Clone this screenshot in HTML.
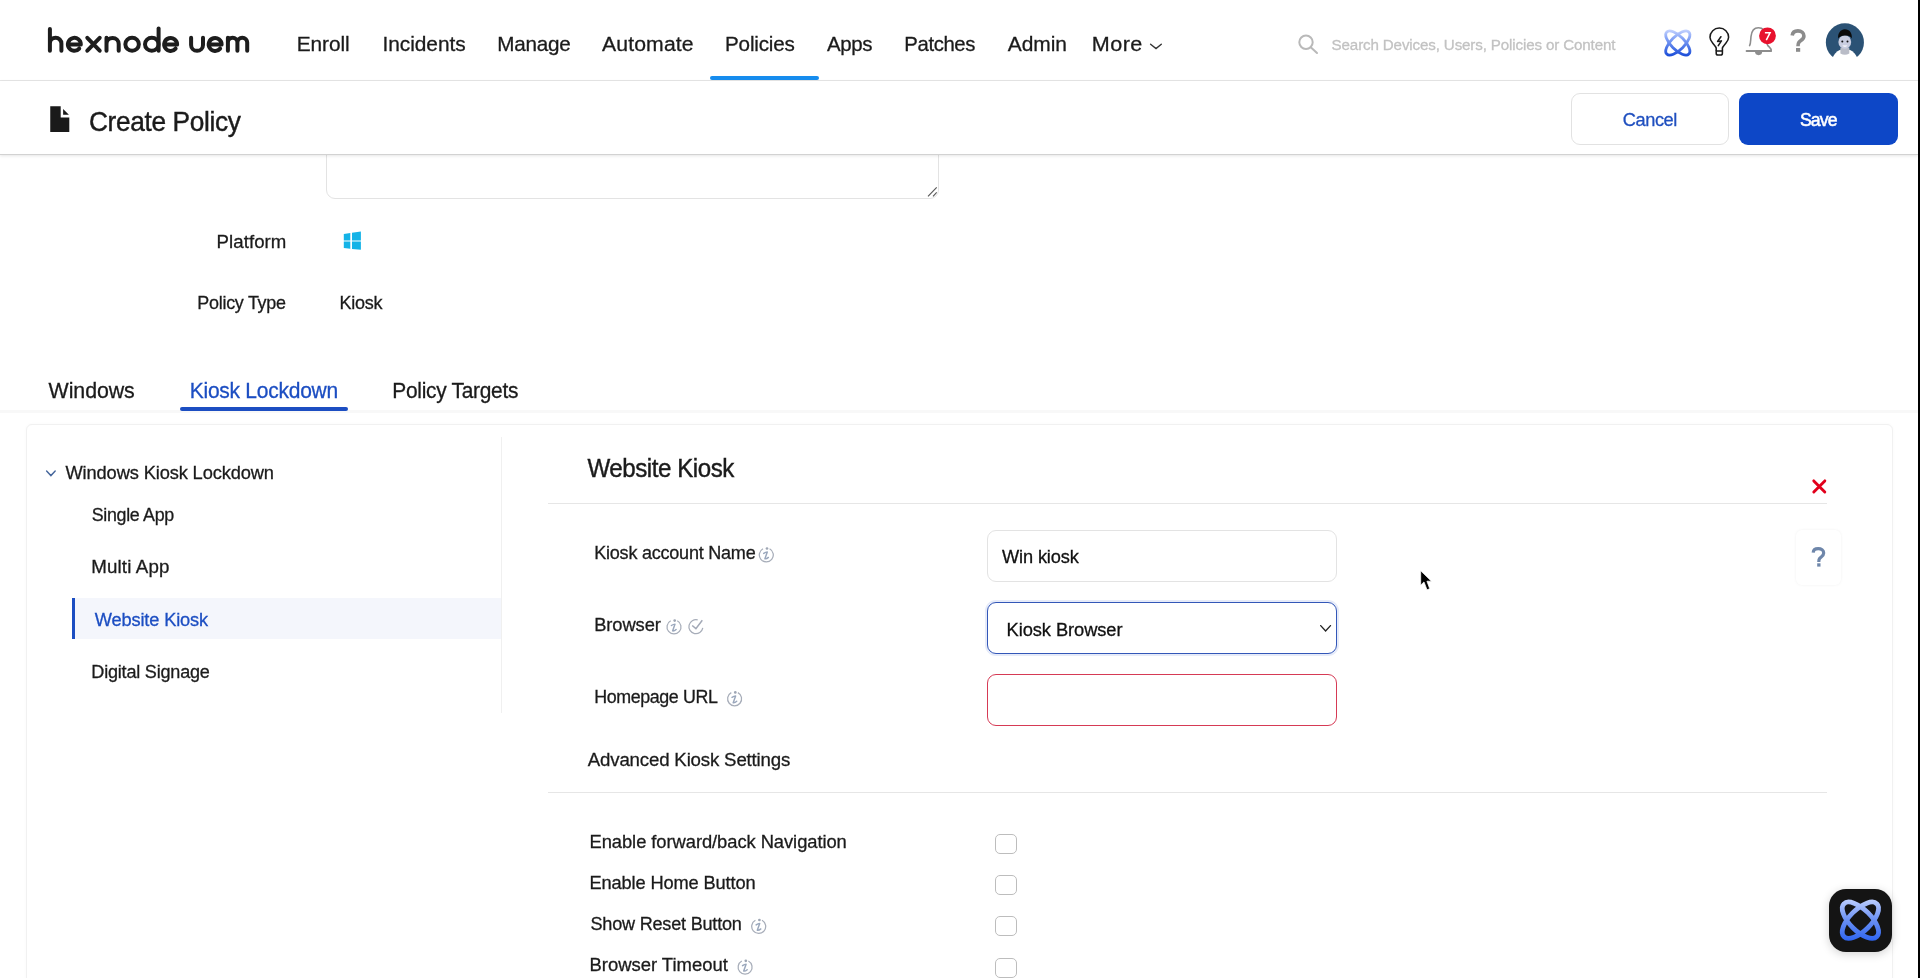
<!DOCTYPE html>
<html lang="en">
<head>
<meta charset="utf-8">
<title>Create Policy - hexnode uem</title>
<style>
  html, body { margin: 0; padding: 0; }
  body { width: 1920px; height: 978px; overflow: hidden; background: #ffffff; position: relative;
         font-family: "Liberation Sans", sans-serif; color: #1b1b1b; }
  .abs { position: absolute; box-sizing: border-box; }
  #header { left: 0; top: 0; width: 1918px; height: 81px; background: #fff; border-bottom: 1px solid #e6e6e6; }
  #nav-underline { left: 710px; top: 76px; width: 109px; height: 4px; background: #168cee; border-radius: 2px; }
  #subbar { left: 0; top: 81px; width: 1918px; height: 74px; background: #fff; border-bottom: 1px solid #d2d2d2;
            box-shadow: 0 1px 3px rgba(0,0,0,0.10); z-index: 3; }
  #btn-cancel { left: 1571px; top: 93px; width: 158px; height: 52px; border: 1px solid #e2e2e2; border-radius: 9px; background: #fff; z-index: 4; }
  #btn-save { left: 1739px; top: 93px; width: 159px; height: 52px; background: #0d47c7; border-radius: 9px; z-index: 4; }
  #textarea { left: 326px; top: 120px; width: 613px; height: 79px; border: 1px solid #e3e3e3; border-radius: 9px; background: #fff; z-index: 1; }
  #tabbar { left: 0; top: 410px; width: 1918px; height: 3px; background: #f8f8f8; }
  #tab-underline { left: 179.5px; top: 406.5px; width: 168px; height: 4px; background: #1c4ec2; border-radius: 2px; z-index: 2; }
  #card { left: 25.5px; top: 424px; width: 1867px; height: 600px; border: 1px solid #f1f1f1; border-radius: 6px; background: #fff;
          box-shadow: 0 0 3px rgba(0,0,0,0.03); }
  #sidebar-border { left: 501px; top: 437px; width: 1px; height: 276px; background: #f0f0f0; }
  #side-active { left: 72px; top: 597.5px; width: 429px; height: 41px; background: #f4f6fc; }
  #side-active-bar { left: 72px; top: 597.5px; width: 2.6px; height: 41px; background: #1c4ec2; }
  .sep { height: 1.6px; background: #e6e6e6; }
  #help-box { left: 1796px; top: 530px; width: 45px; height: 55px; border-radius: 6px; background: #fff;
              box-shadow: 0 0 3px rgba(0,0,0,0.06); }
  .input { border-radius: 9px; background: #fff; }
  #in-name { left: 987px; top: 530px; width: 350px; height: 52px; border: 1px solid #e3e3e3; }
  #in-browser { left: 987px; top: 602px; width: 350px; height: 52px; border: 1.6px solid #3357b8; box-shadow: 0 0 0 2px rgba(60,100,210,0.13); }
  #in-url { left: 987px; top: 674px; width: 350px; height: 52px; border: 1.6px solid #d63a55; }
  .cb { width: 21.5px; height: 20px; border: 1.1px solid #bdbdbd; border-radius: 5px; background: #fff; }
  #chat { left: 1829px; top: 889px; width: 63px; height: 63px; background: #141414; border-radius: 17px;
          box-shadow: 0 2px 10px rgba(0,0,0,0.18); z-index: 4; }
  #scrollstrip { left: 1918px; top: 0; width: 2px; height: 978px; background: #000; z-index: 10; }
  #overlay { position: absolute; left: 0; top: 0; z-index: 5; will-change: transform; }
  #overlay text { font-family: "Liberation Sans", sans-serif; }
</style>
</head>
<body>
  <div class="abs" id="textarea"></div>
  <div class="abs" id="header"></div>
  <div class="abs" id="nav-underline"></div>
  <div class="abs" id="subbar"></div>
  <div class="abs" id="btn-cancel"></div>
  <div class="abs" id="btn-save"></div>
  <div class="abs" id="tabbar"></div>
  <div class="abs" id="tab-underline"></div>
  <div class="abs" id="card"></div>
  <div class="abs" id="sidebar-border"></div>
  <div class="abs" id="side-active"></div>
  <div class="abs" id="side-active-bar"></div>
  <div class="abs sep" style="left:548px;top:502.5px;width:1279px;"></div>
  <div class="abs sep" style="left:548px;top:791.5px;width:1279px;"></div>
  <div class="abs" id="help-box"></div>
  <div class="abs input" id="in-name"></div>
  <div class="abs input" id="in-browser"></div>
  <div class="abs input" id="in-url"></div>
  <div class="abs cb" style="left:995px;top:834px;"></div>
  <div class="abs cb" style="left:995px;top:875px;"></div>
  <div class="abs cb" style="left:995px;top:916px;"></div>
  <div class="abs cb" style="left:995px;top:957.5px;"></div>
  <div class="abs" id="chat"></div>
  <div class="abs" id="scrollstrip"></div>

  <svg id="overlay" width="1920" height="978" viewBox="0 0 1920 978">
    <defs>
      <linearGradient id="atomg" gradientUnits="userSpaceOnUse" x1="0" y1="29" x2="0" y2="57">
        <stop offset="0" stop-color="#c9d6ff"/>
        <stop offset="0.42" stop-color="#7597f3"/>
        <stop offset="1" stop-color="#1548d6"/>
      </linearGradient>
      <linearGradient id="atomg2" gradientUnits="userSpaceOnUse" x1="0" y1="898" x2="0" y2="942">
        <stop offset="0" stop-color="#c2d2ff"/>
        <stop offset="0.5" stop-color="#6a90f4"/>
        <stop offset="1" stop-color="#2b62f0"/>
      </linearGradient>
    </defs>

    <!-- logo: hexnode uem -->
    <g fill="none" stroke="#1d1d1d" stroke-width="4" stroke-linecap="round" stroke-linejoin="round">
      <!-- h -->
      <path d="M49.9 28.9 V50.7 M49.9 43.6 A5.75 5.75 0 0 1 61.4 43.6 V50.7"/>
      <!-- e -->
      <path d="M68.1 44.6 H80.8 A6.45 6.45 0 1 0 79.2 48.6"/>
      <!-- x -->
      <path d="M87.3 37.8 L99.7 50.7 M99.7 37.8 L87.3 50.7"/>
      <!-- n -->
      <path d="M106.5 37.8 V50.7 M106.5 44 A6.1 6.1 0 0 1 118.7 44 V50.7"/>
      <!-- o -->
      <ellipse cx="132.1" cy="44.25" rx="6.75" ry="6.5"/>
      <!-- d -->
      <path d="M158.6 28.4 V50.7"/>
      <ellipse cx="151.8" cy="44.25" rx="6.8" ry="6.5"/>
      <!-- e -->
      <path d="M164.6 44.6 H177.1 A6.45 6.45 0 1 0 175.6 48.6"/>
      <!-- u -->
      <path d="M191.1 37.8 V44.9 A5.95 5.95 0 0 0 203 44.9 V37.8"/>
      <!-- e -->
      <path d="M209.1 44.6 H221.6 A6.45 6.45 0 1 0 220.1 48.6"/>
      <!-- m -->
      <path d="M227.9 37.8 V50.7 M227.9 42.6 A4.75 4.75 0 0 1 237.4 42.6 V50.7 M237.4 42.6 A4.9 4.9 0 0 1 247.2 42.6 V50.7"/>
    </g>

    <!-- More chevron -->
    <path d="M1150.6 44.3 L1156 48.6 L1161.3 44.3" fill="none" stroke="#333" stroke-width="1.4" stroke-linecap="round"/>

    <!-- search icon -->
    <g fill="none" stroke="#b9b9b9" stroke-width="2">
      <circle cx="1306" cy="42.3" r="6.7"/>
      <path d="M1311 47.4 L1317 53" stroke-linecap="round"/>
    </g>

    <!-- atom icon (header) -->
    <g fill="none" stroke="url(#atomg)" stroke-width="2.8">
      <path d="M1688.83 54.03 A15.6 6.7 45 1 1 1666.77 31.97 A15.6 6.7 45 1 1 1688.83 54.03 Z"/>
      <path d="M1688.83 31.97 A15.6 6.7 -45 1 1 1666.77 54.03 A15.6 6.7 -45 1 1 1688.83 31.97 Z"/>
    </g>

    <!-- bulb icon -->
    <g fill="none" stroke="#1a1a1a" stroke-width="1.55" stroke-linejoin="round">
      <path d="M1716.2 51 V48.2 C1716 46.4 1714.6 45.5 1712.8 43.3 C1711.2 41.4 1710 39.6 1710 37.3 A9.3 9.3 0 0 1 1728.6 37.3 C1728.6 39.6 1727.4 41.4 1725.8 43.3 C1724 45.5 1722.6 46.4 1722.4 48.2 V51"/>
      <path d="M1716.2 51 H1722.4 V53.2 Q1722.4 55 1720.6 55 H1718 Q1716.2 55 1716.2 53.2 Z"/>
      <path d="M1720.9 36.7 L1717.6 41.4 L1721.4 40.9 L1718.3 45.6" stroke-linecap="round"/>
    </g>

    <!-- bell icon -->
    <g fill="none" stroke="#8d8d8d" stroke-width="1.6" stroke-linecap="round">
      <path d="M1749.6 45.6 C1750.8 43.6 1750.6 40 1751 36.5 C1751.6 31 1754.5 27.8 1758.4 27.8 C1762.5 27.8 1765.5 31 1766 36.5 C1766.4 40.5 1766.3 43.5 1767.8 45.5 C1769.2 47.3 1771.6 48.4 1771.2 50.9"/>
      <path d="M1746.6 51 H1771" stroke-width="1.9"/>
    </g>
    <path d="M1755 51.6 A3.6 3.6 0 0 0 1762.2 51.6 Z" fill="#8d8d8d"/>
    <circle cx="1767.5" cy="35.8" r="8.4" fill="#e8112d"/>
    <path d="M1764.9 32.7 H1770.1 L1766.3 40.2" fill="none" stroke="#fff" stroke-width="1.5" stroke-linejoin="miter"/>

    <!-- question mark (header) -->
    <g fill="none" stroke="#8c8c8c" stroke-width="3.6">
      <path d="M1792.2 35.5 C1792.6 32.2 1795 30.9 1797.9 30.9 C1801.6 30.9 1803.9 32.9 1803.9 35.9 C1803.9 39.6 1800.5 40.2 1798.9 42.3 C1798.2 43.2 1798 44.3 1798 46.2"/>
    </g>
    <rect x="1796" y="48" width="4.2" height="3.8" fill="#8c8c8c"/>

    <!-- avatar -->
    <g>
      <circle cx="1844.9" cy="42.4" r="19.05" fill="#2b5275"/>
      <ellipse cx="1844.9" cy="63.2" rx="13.4" ry="14.2" fill="#ffffff"/>
      <rect x="1824" y="61.5" width="42" height="6" fill="#ffffff"/>
      <path d="M1840.4 47.5 H1849.3 V53.5 Q1844.9 56.2 1840.4 53.5 Z" fill="#b9bcc7"/>
      <ellipse cx="1844.8" cy="42" rx="6.4" ry="6.7" fill="#c9cde0"/>
      <path d="M1838.2 38.6 C1837.6 33.6 1840.2 29.6 1844.6 29.3 C1849.4 29.1 1852.4 32.8 1851.8 38.6 C1850.6 36.3 1848.4 35.4 1845.6 35.6 C1842.6 35.3 1839.8 36.2 1838.2 38.6 Z" fill="#0b0b0b"/>
      <circle cx="1842.3" cy="41.5" r="1" fill="#111"/>
      <circle cx="1847.5" cy="41.5" r="1" fill="#111"/>
      <path d="M1842.3 45.4 Q1844.9 48.2 1847.5 45.4 Z" fill="#fff"/>
    </g>

    <!-- document icon -->
    <path d="M50.25 106.2 H60.7 V117.5 H69.3 V132.1 H50.25 Z" fill="#1a1a1a"/>
    <path d="M63.1 109.1 V114.8 H68.9 Z" fill="#1a1a1a"/>

    <!-- textarea resize handle -->
    <path d="M928 196.3 L936.7 187.3 M933 196.3 L936.7 192.4" stroke="#5a5a5a" stroke-width="1.2"/>

    <!-- windows icon -->
    <g fill="#14b3e7">
      <path d="M343.8 234 L350.3 233.1 V240.5 H343.8 Z"/>
      <path d="M352 232.8 L360.9 231.6 V240.5 H352 Z"/>
      <path d="M343.8 241.6 H350.3 V248.8 L343.8 247.9 Z"/>
      <path d="M352 241.6 H360.9 V249.8 L352 248.9 Z"/>
    </g>

    <!-- sidebar chevron -->
    <path d="M46.6 471 L50.9 475.6 L55.2 471" fill="none" stroke="#46679c" stroke-width="1.4" stroke-linecap="round"/>

    <!-- red X -->
    <path d="M1813.8 480.9 L1824.8 492 M1824.8 480.9 L1813.8 492" stroke="#e2001c" stroke-width="2.9" stroke-linecap="round"/>

    <!-- help ? -->
    <g fill="none" stroke="#6e86aa" stroke-width="3.2">
      <path d="M1813.2 552.6 C1813.4 550 1815.3 548.7 1818.2 548.7 C1821.3 548.7 1823.7 550.3 1823.7 553 C1823.7 556.2 1820.9 556.7 1819.6 558.5 C1819 559.3 1818.8 560.3 1818.8 562"/>
    </g>
    <rect x="1817.2" y="563.3" width="3.3" height="3.3" fill="#6e86aa"/>

    <!-- info icons -->
    <path d="M769.59 548.72 A7.0 7.0 0 1 1 763.01 548.72" fill="none" stroke="#a7adb9" stroke-width="1.25"/><circle cx="767.00" cy="548.50" r="1.35" fill="#9ea6b4"/><path d="M763.70 553.40 Q765.70 552.00 767.30 552.00 L764.90 558.80 Q766.70 559.00 768.40 557.40" fill="none" stroke="#9aa7bc" stroke-width="1.45" stroke-linejoin="round" stroke-linecap="round"/>
<path d="M677.29 620.82 A7.0 7.0 0 1 1 670.71 620.82" fill="none" stroke="#a7adb9" stroke-width="1.25"/><circle cx="674.70" cy="620.60" r="1.35" fill="#9ea6b4"/><path d="M671.40 625.50 Q673.40 624.10 675.00 624.10 L672.60 630.90 Q674.40 631.10 676.10 629.50" fill="none" stroke="#9aa7bc" stroke-width="1.45" stroke-linejoin="round" stroke-linecap="round"/>
<path d="M737.89 692.62 A7.0 7.0 0 1 1 731.31 692.62" fill="none" stroke="#a7adb9" stroke-width="1.25"/><circle cx="735.30" cy="692.40" r="1.35" fill="#9ea6b4"/><path d="M732.00 697.30 Q734.00 695.90 735.60 695.90 L733.20 702.70 Q735.00 702.90 736.70 701.30" fill="none" stroke="#9aa7bc" stroke-width="1.45" stroke-linejoin="round" stroke-linecap="round"/>
<path d="M761.99 920.22 A7.0 7.0 0 1 1 755.41 920.22" fill="none" stroke="#a7adb9" stroke-width="1.25"/><circle cx="759.40" cy="920.00" r="1.35" fill="#9ea6b4"/><path d="M756.10 924.90 Q758.10 923.50 759.70 923.50 L757.30 930.30 Q759.10 930.50 760.80 928.90" fill="none" stroke="#9aa7bc" stroke-width="1.45" stroke-linejoin="round" stroke-linecap="round"/>
<path d="M748.39 961.02 A7.0 7.0 0 1 1 741.81 961.02" fill="none" stroke="#a7adb9" stroke-width="1.25"/><circle cx="745.80" cy="960.80" r="1.35" fill="#9ea6b4"/><path d="M742.50 965.70 Q744.50 964.30 746.10 964.30 L743.70 971.10 Q745.50 971.30 747.20 969.70" fill="none" stroke="#9aa7bc" stroke-width="1.45" stroke-linejoin="round" stroke-linecap="round"/>
<path d="M702.79 627.92 A7.0 7.0 0 1 1 697.71 619.94" fill="none" stroke="#a7adb9" stroke-width="1.25"/><path d="M692.20 625.50 L695.90 628.60 L702.30 620.30" fill="none" stroke="#a2a8b6" stroke-width="1.5"/>

    <!-- select chevron -->
    <path d="M1320.7 625.6 L1325.6 630.9 L1330.5 625.6" fill="none" stroke="#222" stroke-width="1.35" stroke-linecap="round"/>

    <!-- chat widget atom -->
    <g fill="none" stroke="url(#atomg2)" stroke-width="4.8">
      <path d="M1876.80 936.60 A23.2 10.4 45 1 1 1844.00 903.80 A23.2 10.4 45 1 1 1876.80 936.60 Z"/>
      <path d="M1876.80 903.80 A23.2 10.4 -45 1 1 1844.00 936.60 A23.2 10.4 -45 1 1 1876.80 903.80 Z"/>
    </g>

    <!-- cursor -->
    <defs><filter id="curblur" x="-50%" y="-50%" width="200%" height="200%"><feGaussianBlur stdDeviation="0.45"/></filter></defs>
    <path d="M1420.7 570.8 V585.2 L1424 581.9 L1427 589.8 L1429.7 588.7 L1426.9 581.2 H1431.4 Z" fill="#000" stroke="#fff" stroke-width="0.7" stroke-linejoin="round" filter="url(#curblur)"/>

    <text transform="translate(296.76 50.80) scale(0.9925 1)" font-size="21" fill="#1b1b1b" letter-spacing="-0.078" stroke="#1b1b1b" stroke-width="0.3">Enroll</text>
<text transform="translate(382.51 50.80) scale(0.9948 1)" font-size="21" fill="#1b1b1b" letter-spacing="-0.053" stroke="#1b1b1b" stroke-width="0.3">Incidents</text>
<text transform="translate(497.22 50.80) scale(0.9850 1)" font-size="21" fill="#1b1b1b" letter-spacing="-0.223" stroke="#1b1b1b" stroke-width="0.3">Manage</text>
<text transform="translate(602.00 50.80) scale(1.0100 1)" font-size="21" fill="#1b1b1b" letter-spacing="0.127" stroke="#1b1b1b" stroke-width="0.3">Automate</text>
<text transform="translate(725.02 50.80) scale(0.9825 1)" font-size="21" fill="#1b1b1b" letter-spacing="-0.177" stroke="#1b1b1b" stroke-width="0.3">Policies</text>
<text transform="translate(826.90 50.80) scale(0.9758 1)" font-size="21" fill="#1b1b1b" letter-spacing="-0.382" stroke="#1b1b1b" stroke-width="0.3">Apps</text>
<text transform="translate(904.33 50.80) scale(0.9680 1)" font-size="21" fill="#1b1b1b" letter-spacing="-0.396" stroke="#1b1b1b" stroke-width="0.3">Patches</text>
<text transform="translate(1007.70 50.80) scale(0.9988 1)" font-size="21" fill="#1b1b1b" letter-spacing="-0.018" stroke="#1b1b1b" stroke-width="0.3">Admin</text>
<text transform="translate(1091.87 50.80) scale(1.0281 1)" font-size="21" fill="#1b1b1b" letter-spacing="0.433" stroke="#1b1b1b" stroke-width="0.3">More</text>
<text transform="translate(1331.60 49.50) scale(0.9790 1)" font-size="15.5" fill="#c2c2c2" letter-spacing="-0.152" stroke="#c2c2c2" stroke-width="0.3">Search Devices, Users, Policies or Content</text>
<text transform="translate(88.93 131.10) scale(0.9729 1)" font-size="27" fill="#1b1b1b" letter-spacing="-0.362" stroke="#1b1b1b" stroke-width="0.42">Create Policy</text>
<text transform="translate(1622.80 125.90) scale(0.9606 1)" font-size="19" fill="#1f4fbf" letter-spacing="-0.456" stroke="#1f4fbf" stroke-width="0.3">Cancel</text>
<text transform="translate(1800.00 125.90) scale(0.9304 1)" font-size="19" fill="#ffffff" letter-spacing="-0.991" stroke="#ffffff" stroke-width="0.55">Save</text>
<text transform="translate(216.59 247.90) scale(1.0069 1)" font-size="18.5" fill="#1b1b1b" letter-spacing="0.066" stroke="#1b1b1b" stroke-width="0.3">Platform</text>
<text transform="translate(197.33 309.20) scale(0.9695 1)" font-size="18.5" fill="#1b1b1b" letter-spacing="-0.285" stroke="#1b1b1b" stroke-width="0.3">Policy Type</text>
<text transform="translate(339.53 309.20) scale(0.9742 1)" font-size="18.5" fill="#1b1b1b" letter-spacing="-0.290" stroke="#1b1b1b" stroke-width="0.3">Kiosk</text>
<text transform="translate(48.60 398.00) scale(0.9944 1)" font-size="21.5" fill="#1b1b1b" letter-spacing="-0.081" stroke="#1b1b1b" stroke-width="0.3">Windows</text>
<text transform="translate(189.72 398.00) scale(0.9776 1)" font-size="21.5" fill="#1c4ec2" letter-spacing="-0.265" stroke="#1c4ec2" stroke-width="0.3">Kiosk Lockdown</text>
<text transform="translate(392.33 398.00) scale(0.9724 1)" font-size="21.5" fill="#1b1b1b" letter-spacing="-0.280" stroke="#1b1b1b" stroke-width="0.3">Policy Targets</text>
<text transform="translate(65.50 478.90) scale(0.9876 1)" font-size="18.5" fill="#1b1b1b" letter-spacing="-0.127" stroke="#1b1b1b" stroke-width="0.3">Windows Kiosk Lockdown</text>
<text transform="translate(91.80 520.70) scale(0.9652 1)" font-size="18.5" fill="#1b1b1b" letter-spacing="-0.345" stroke="#1b1b1b" stroke-width="0.3">Single App</text>
<text transform="translate(91.29 573.00) scale(1.0136 1)" font-size="18.5" fill="#1b1b1b" letter-spacing="0.129" stroke="#1b1b1b" stroke-width="0.3">Multi App</text>
<text transform="translate(94.70 625.50) scale(0.9858 1)" font-size="18.5" fill="#1c4ec2" letter-spacing="-0.139" stroke="#1c4ec2" stroke-width="0.3">Website Kiosk</text>
<text transform="translate(91.32 677.80) scale(0.9764 1)" font-size="18.5" fill="#1b1b1b" letter-spacing="-0.208" stroke="#1b1b1b" stroke-width="0.3">Digital Signage</text>
<text transform="translate(587.40 476.60) scale(0.9652 1)" font-size="25" fill="#1b1b1b" letter-spacing="-0.459" stroke="#1b1b1b" stroke-width="0.42">Website Kiosk</text>
<text transform="translate(594.22 559.40) scale(0.9757 1)" font-size="18.5" fill="#1b1b1b" letter-spacing="-0.240" stroke="#1b1b1b" stroke-width="0.3">Kiosk account Name</text>
<text transform="translate(594.21 631.10) scale(0.9918 1)" font-size="18.5" fill="#1b1b1b" letter-spacing="-0.091" stroke="#1b1b1b" stroke-width="0.3">Browser</text>
<text transform="translate(594.23 702.90) scale(0.9653 1)" font-size="18.5" fill="#1b1b1b" letter-spacing="-0.415" stroke="#1b1b1b" stroke-width="0.3">Homepage URL</text>
<text transform="translate(1002.00 563.20) scale(0.9855 1)" font-size="18.5" fill="#111111" letter-spacing="-0.145" stroke="#111111" stroke-width="0.3">Win kiosk</text>
<text transform="translate(1006.61 635.90) scale(0.9903 1)" font-size="18.5" fill="#111111" letter-spacing="-0.095" stroke="#111111" stroke-width="0.3">Kiosk Browser</text>
<text transform="translate(587.80 766.20) scale(0.9820 1)" font-size="19" fill="#1b1b1b" letter-spacing="-0.172" stroke="#1b1b1b" stroke-width="0.3">Advanced Kiosk Settings</text>
<text transform="translate(589.51 847.80) scale(0.9928 1)" font-size="18.5" fill="#1b1b1b" letter-spacing="-0.064" stroke="#1b1b1b" stroke-width="0.3">Enable forward/back Navigation</text>
<text transform="translate(589.51 889.30) scale(0.9862 1)" font-size="18.5" fill="#1b1b1b" letter-spacing="-0.137" stroke="#1b1b1b" stroke-width="0.3">Enable Home Button</text>
<text transform="translate(590.50 930.30) scale(0.9780 1)" font-size="18.5" fill="#1b1b1b" letter-spacing="-0.217" stroke="#1b1b1b" stroke-width="0.3">Show Reset Button</text>
<text transform="translate(589.50 971.30) scale(0.9986 1)" font-size="18.5" fill="#1b1b1b" letter-spacing="-0.014" stroke="#1b1b1b" stroke-width="0.3">Browser Timeout</text>
  </svg>
</body>
</html>
